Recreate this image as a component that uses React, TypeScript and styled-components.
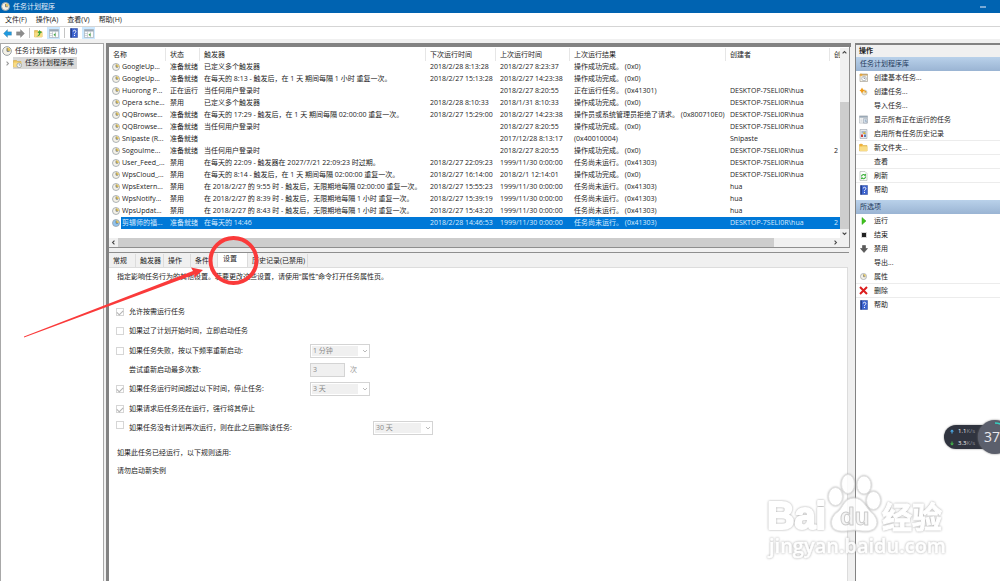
import React from "react";
import styled, { createGlobalStyle, css } from "styled-components";

const GlobalStyle = createGlobalStyle`
  * { box-sizing: border-box; }
  body {
    margin: 0;
    background: #fff;
    color: #1c1c1c;
    font: 7px/12px "Open Sans", "Noto Sans CJK SC", sans-serif;
  }
  button, input, select { font: inherit; color: inherit; margin: 0; padding: 0; }
  button { border: 0; background: none; text-align: left; }
`;

const Window = styled.div`
  position: relative;
  display: flex;
  flex-direction: column;
  min-height: 100vh;
  overflow: hidden;
  white-space: nowrap;
`;

const TitleBar = styled.header`
  display: flex;
  align-items: center;
  gap: 3px;
  height: 13px;
  padding: 0 14px 0 1px;
  background: #0063b1;
  color: #e4eefa;
`;

const Title = styled.h1`
  flex: 1;
  margin: 0;
  font-size: 7px;
  font-weight: 400;
`;

const Minimize = styled.button`
  width: 6px;
  height: 2px;
  background: #78a9d6;
`;

const MenuBar = styled.nav`
  display: flex;
  gap: 9px;
  height: 14px;
  padding: 0 5px;
  border-bottom: 1px solid #d5d5d5;
`;

const ToolBar = styled.div`
  display: flex;
  align-items: center;
  gap: 4px;
  height: 16px;
  padding: 0 3px;
  border-bottom: 4px solid #f0f0f0;
`;

const ToolButton = styled.button<{ $active?: boolean }>`
  display: flex;
  align-items: center;
  justify-content: center;
  width: ${(p) => (p.$active ? 13 : 9)}px;
  height: 12px;
  background: ${(p) => (p.$active ? "#cce8ff" : "none")};
`;

const ToolDivider = styled.span`
  width: 1px;
  height: 10px;
  background: #c4c4c4;
`;

const Workspace = styled.main`
  flex: 1;
  display: flex;
  background: #f0f0f0;
`;

const TreePane = styled.aside`
  flex: 0 0 104px;
  padding: 1px 0 0 1px;
  background: #fff;
  border: solid #a8a8a8;
  border-width: 1px 1px 0 1px;
`;

const TreeRow = styled.div<{ $child?: boolean }>`
  display: flex;
  align-items: center;
  gap: 3px;
  height: 12px;
  padding-left: ${(p) => (p.$child ? 3 : 0)}px;
`;

const TreeLabel = styled.span<{ $selected?: boolean }>`
  display: flex;
  align-items: center;
  gap: 3px;
  height: 12px;
  padding-right: 3px;
  background: ${(p) => (p.$selected ? "#d9d9d9" : "none")};
`;

const CenterPane = styled.section`
  flex: 1;
  min-width: 0;
  display: flex;
  flex-direction: column;
  margin: 0 4px 0 2px;
  border: solid #828282;
  border-width: 4px 0 0 3px;
`;

const ListPane = styled.div`
  margin-right: 1px;
  padding-top: 1px;
  background: #fff;
  border: solid #8e8e8e;
  border-width: 0 1px 1px 0;
`;

const ListArea = styled.div`
  display: flex;
`;

const TableClip = styled.div`
  flex: 1;
  min-width: 0;
  overflow: hidden;
  padding-bottom: 9px;
`;

const TaskTable = styled.table`
  width: 100%;
  table-layout: fixed;
  border-collapse: separate;
  border-spacing: 0;
`;

const Col = styled.col<{ $w?: number }>`
  ${(p) => p.$w && css`width: ${p.$w}px;`}
`;

const Th = styled.th`
  height: 13px;
  padding: 0 0 0 4px;
  overflow: hidden;
  border-right: 1px solid #e6e6e6;
  font-weight: 400;
  text-align: left;
  &:last-child { border-right: 0; }
`;

const Td = styled.td<{ $selected?: boolean }>`
  height: 12px;
  padding: 0 0 0 4px;
  overflow: hidden;
  ${(p) => p.$selected && css`background: #0078d7; color: #d9ecff;`}
`;

const NameTd = styled.td`
  height: 12px;
  padding: 0 0 0 3px;
`;

const NameBox = styled.div`
  display: flex;
  align-items: center;
  gap: 1px;
`;

const NameText = styled.span<{ $selected?: boolean }>`
  flex: 1;
  height: 12px;
  padding-left: 1px;
  overflow: hidden;
  ${(p) => p.$selected && css`background: #0078d7; color: #d9ecff;`}
`;

const VScroll = styled.div`
  display: flex;
  flex-direction: column;
  align-items: center;
  width: 9px;
  padding: 2px 0;
  background: #f0f0f0;
`;

const VThumb = styled.div`
  flex: 1;
  width: 9px;
  margin: 47px 0 2px;
  background: #cdcdcd;
`;

const HScroll = styled.div`
  display: flex;
  align-items: center;
  height: 9px;
  padding: 0 11px 0 2px;
  background: #f0f0f0;
`;

const HTrack = styled.div`
  flex: 1;
  height: 9px;
  margin: 0 2px;
`;

const HThumb = styled.div`
  width: 92%;
  height: 9px;
  background: #cdcdcd;
`;

const DetailPane = styled.div`
  flex: 1;
  display: flex;
  flex-direction: column;
  margin-top: 4px;
  margin-right: 2px;
  border-top: 1px solid #8e8e8e;
`;

const TabList = styled.div`
  display: flex;
  align-items: flex-end;
  height: 14px;
`;

const Tab = styled.button<{ $selected?: boolean }>`
  height: ${(p) => (p.$selected ? 14 : 13)}px;
  padding: ${(p) => (p.$selected ? "0 10px 2px 5px" : "0 2px 0 4px")};
  min-width: 27px;
  border-right: 1px solid #dcdcdc;
  background: ${(p) => (p.$selected ? "#fff" : "#f0f0f0")};
`;

const TabBody = styled.div`
  flex: 1;
  margin-right: 1px;
  padding: 3px 7px;
  background: #fff;
  border: solid #dcdcdc;
  border-width: 1px 1px 0 0;
`;

const Para = styled.p`
  margin: 0;
  padding: 0 1px;
`;

const Options = styled.form`
  display: grid;
  grid-auto-rows: 1fr;
  align-items: center;
  height: 136px;
  margin: 19px 0 9px;
`;

const Option = styled.div`
  display: grid;
  grid-template-columns: 13px 181px auto;
  align-items: center;
  height: 14px;
`;

const WideOption = styled(Option)`
  grid-template-columns: 13px 244px auto;
`;

const Check = styled.input<{ $raised?: boolean }>`
  appearance: none;
  display: flex;
  justify-content: center;
  width: 8px;
  height: 8px;
  border: 1px solid #d6d6d6;
  background: #fff;
  align-self: ${(p) => (p.$raised ? "start" : "center")};
  &:checked::after {
    content: "";
    width: 3px;
    height: 5px;
    border: solid #b4b4b4;
    border-width: 0 1px 1px 0;
    transform: rotate(45deg);
  }
`;

const OptionLabel = styled.label`
  grid-column: 2;
`;

const SelectBox = styled.span`
  position: relative;
  width: 60px;
  height: 14px;
`;

const Select = styled.select`
  appearance: none;
  display: block;
  width: 60px;
  height: 14px;
  padding-left: 2px;
  border: 1px solid #d4d4d4;
  border-radius: 0;
  background: linear-gradient(#f0f0f0, #f0f0f0) 1px 1px / 46px 10px no-repeat #fff;
  &:disabled { color: #8a8a8a; opacity: 1; }
`;

const SelectArrow = styled.svg`
  position: absolute;
  right: 2px;
  top: 5px;
`;

const CountField = styled.span`
  display: flex;
  align-items: center;
  gap: 5px;
  color: #9a9a9a;
`;

const NumberInput = styled.input`
  width: 35px;
  height: 14px;
  padding-left: 2px;
  border: 1px solid #d4d4d4;
  background: #f0f0f0;
  color: #8a8a8a;
`;

const Rule = styled(Para)`
  margin-bottom: 6px;
`;

const ActionPane = styled.aside`
  flex: 0 0 145px;
  background: #fff;
  border: solid #828282;
  border-width: 2px 0 0 1px;
`;

const PaneTitle = styled.h2`
  height: 12px;
  margin: 0;
  padding-left: 3px;
  background: #f0f0f0;
  font-size: 7px;
  font-weight: 600;
`;

const SectionTitle = styled.h3`
  height: 14px;
  margin: 0;
  padding-left: 4px;
  background: linear-gradient(#b9d1ea, #9ab4d3);
  color: #1e395b;
  font-size: 7px;
  font-weight: 400;
  line-height: 14px;
`;

const ActionList = styled.ul`
  margin: 0 0 3px;
  padding: 0;
  list-style: none;
`;

const ActionItem = styled.li<{ $ruled?: boolean }>`
  height: 14px;
  border-bottom: 1px solid ${(p) => (p.$ruled ? "#ececec" : "transparent")};
`;

const ActionButton = styled.button`
  display: flex;
  align-items: center;
  gap: 6px;
  width: 100%;
  height: 13px;
  padding-left: 3px;
`;

const IconSlot = styled.span`
  display: flex;
  justify-content: center;
  width: 9px;
`;

const Markup = styled.svg`
  position: absolute;
  left: 20px;
  top: 230px;
  pointer-events: none;
`;

const Watermark = styled.svg`
  position: absolute;
  right: 50px;
  bottom: 18px;
  pointer-events: none;
  opacity: 0.85;
  filter: drop-shadow(0 0 1px #999);
`;

const SpeedMeter = styled.div`
  position: absolute;
  right: -12px;
  top: 420px;
  display: flex;
  align-items: center;
`;

const Speeds = styled.div`
  width: 45px;
  height: 24px;
  margin-right: -11px;
  padding-left: 6px;
  border-radius: 12px 0 0 12px;
  background: #30343f;
  color: #f2f2f2;
  font-size: 6px;
  box-shadow: 0 0 2px #888;
`;

const Speed = styled.div`
  display: flex;
  align-items: center;
  gap: 4px;
  height: 12px;
`;

const Unit = styled.span`
  color: #8b8f99;
`;

const Gauge = styled.div`
  position: relative;
  width: 34px;
  height: 34px;
  padding-left: 6px;
  border-radius: 50%;
  background: #5b5f6c;
  color: #e8e8ec;
  font-size: 14px;
  line-height: 34px;
  box-shadow: 0 0 2px #777;
`;

const GaugeArc = styled.svg`
  position: absolute;
  left: 0;
  top: 0;
`;

const Clock = ({ size = 8, face = "#f4f1e6" }: { size?: number; face?: string }) => (
  <svg width={size} height={size} viewBox="0 0 16 16">
    <circle cx="8" cy="8" r="7" fill={face} stroke="#9aa1a7" strokeWidth="1.6" />
    <path d="M8 8V2.5A5.5 5.5 0 0 1 13.5 8Z" fill="#e5c65c" />
    <path d="M8 3.5V8.5H12" fill="none" stroke="#5a6470" strokeWidth="1.3" />
  </svg>
);

const Arrow = ({ color, flip }: { color: string; flip?: boolean }) => (
  <svg width="9" height="9" viewBox="0 0 18 18">
    <path d={flip ? "M17 9L9 1V5.500H1V12.500H9V17Z" : "M1 9L9 1V5.500H17V12.500H9V17Z"} fill={color} stroke="#00000040" />
  </svg>
);

const Folder = ({ mark }: { mark?: "up" | "new" | "clock" }) => (
  <svg width="9" height="9" viewBox="0 0 18 18">
    <path d="M1 3H7L9 5H16V16H1Z" fill="#efc75e" stroke="#cfa23a" />
    <path d="M1 7H17V16H1Z" fill="#f9dc86" />
    {mark === "up" && <path d="M4 15Q10 13 10 8H7L11 2L16 8H13Q12 15 4 15Z" fill="#3fa63a" />}
    {mark === "new" && <path d="M4 0L5 3L8 4L5 5L4 8L3 5L0 4L3 3Z" fill="#f5a623" />}
    {mark === "clock" && (
      <g>
        <circle cx="12.500" cy="12.500" r="4.700" fill="#f4f6f8" stroke="#8794a0" strokeWidth="1.300" />
        <path d="M12.500 9.500V12.500H15" fill="none" stroke="#4f6f96" />
      </g>
    )}
  </svg>
);

const Help = () => (
  <svg width="8" height="10" viewBox="0 0 16 20">
    <path d="M1 1H15V19H1Z" fill="#3b62cf" stroke="#2b4794" />
    <path d="M1 1H4V19H1Z" fill="#243f8f" />
    <path d="M6.500 7Q6.500 4.500 9 4.500T11.700 7Q11.700 8.500 10 9.600Q9 10.300 9 12" fill="none" stroke="#fff" strokeWidth="1.800" />
    <circle cx="9" cy="14.800" r="1.200" fill="#fff" />
  </svg>
);

const PanelIcon = ({ mark }: { mark?: "left" | "clock" }) => (
  <svg width="10" height="9" viewBox="0 0 20 18">
    <path d="M1 1H19V17H1Z" fill="#fbfbfb" stroke="#8f98a0" />
    <path d="M1 1H19V5H1Z" fill="#9aa8b5" />
    {mark !== "clock" && <path d="M7 5V17M13 5V17M1 9H7M1 13H7" stroke="#a5b0ba" />}
    {mark === "left" && <path d="M13 8V15L9 11.500Z" fill="#3ca43c" />}
    {mark === "clock" && (
      <g>
        <path d="M3 8H8M3 11H8M3 14H8" stroke="#a5b0ba" />
        <path d="M10 7H18V17H10Z" fill="#dce6f0" stroke="#7d8995" />
        <path d="M14 9V13H17" fill="none" stroke="#4f6f96" />
      </g>
    )}
  </svg>
);

const BasicTask = () => (
  <svg width="9" height="9" viewBox="0 0 18 18">
    <path d="M2 2H17V17H2Z" fill="#f7f3e9" stroke="#8a8273" />
    <path d="M2 2H17V5H2Z" fill="#c6a56b" />
    <circle cx="10" cy="11" r="4.500" fill="#fff" stroke="#77838e" />
    <path d="M10 8V11H12.500" fill="none" stroke="#456" />
    <path d="M4 0L5 3L8 4L5 5L4 8L3 5L0 4L3 3Z" fill="#f5a623" />
  </svg>
);

const NewTask = () => (
  <svg width="9" height="9" viewBox="0 0 18 18">
    <circle cx="11" cy="11" r="5" fill="#eee6cc" stroke="#9da3a8" />
    <path d="M11 11V7A4 4 0 0 1 15 11Z" fill="#e0a030" />
    <path d="M6 1L8 5L12 7L8 9L6 13L4 9L1 7L4 5Z" fill="#f29a12" />
  </svg>
);

const History = () => (
  <svg width="9" height="10" viewBox="0 0 18 20">
    <path d="M2 1H16V19H2Z" fill="#e4e8ed" stroke="#8c95a0" />
    <path d="M5 4H14V9H5Z" fill="#aab9ca" />
    <path d="M10 5L14 10L8 10Z" fill="#e0b030" />
    <path d="M4 11H8V16H4Z" fill="#d13a34" />
    <path d="M10 11H14V16H10Z" fill="#5880b8" />
  </svg>
);

const Refresh = () => (
  <svg width="9" height="10" viewBox="0 0 18 20">
    <path d="M2 1H12L16 5V19H2Z" fill="#fbfdfb" stroke="#97a39a" />
    <path d="M5 11A4 4 0 0 1 12 8.500M13 11A4 4 0 0 1 6 14" fill="none" stroke="#35ad35" strokeWidth="2.200" />
    <path d="M9.500 9.500H14V5ZM8.500 13H4V17Z" fill="#35ad35" />
  </svg>
);

const Play = () => (
  <svg width="8" height="8" viewBox="0 0 16 16"><path d="M4 1L12 8L4 15Z" fill="#3fc51c" stroke="#2f9d18" /></svg>
);

const Stop = () => (
  <svg width="8" height="8" viewBox="0 0 16 16"><path d="M2 2H14V14H2Z" fill="#d8d8d8" /><path d="M4 4H12V12H4Z" fill="#222" /></svg>
);

const Disable = () => (
  <svg width="8" height="8" viewBox="0 0 16 16"><path d="M5 1H11V7H15L8 15L1 7H5Z" fill="#5a5a5a" stroke="#3c3c3c" /></svg>
);

const Delete = () => (
  <svg width="9" height="9" viewBox="0 0 18 18"><path d="M2 2L16 16M16 2L2 16" stroke="#dc1e1e" strokeWidth="4" /></svg>
);

const chevrons = {
  up: "M1 5.500L4 2.500L7 5.500",
  down: "M1 2.500L4 5.500L7 2.500",
  left: "M5.500 1L2.500 4L5.500 7",
  right: "M2.500 1L5.500 4L2.500 7",
};

const Chevron = ({ dir, size = 5, color = "#444" }: { dir: keyof typeof chevrons; size?: number; color?: string }) => (
  <svg width={size} height={size} viewBox="0 0 8 8">
    <path d={chevrons[dir]} fill="none" stroke={color} strokeWidth="1.700" />
  </svg>
);

const columns: [string, number?][] = [
  ["名称", 57], ["状态", 34], ["触发器", 226], ["下次运行时间", 70],
  ["上次运行时间", 74], ["上次运行结果", 156], ["创建者", 104], ["创"],
];

const HOST = "DESKTOP-7SELI0R\\hua";
const OK = "操作成功完成。 (0x0)";
const NOT_RUN = "任务尚未运行。 (0x41303)";
const NEVER = "1999/11/30 0:00:00";

const tasks: string[][] = [
  ["GoogleUp...", "准备就绪", "已定义多个触发器", "2018/2/28 8:13:28", "2018/2/27 8:23:37", OK, "", ""],
  ["GoogleUp...", "准备就绪", "在每天的 8:13 - 触发后，在 1 天 期间每隔 1 小时 重复一次。", "2018/2/27 15:13:28", "2018/2/27 14:23:38", OK, "", ""],
  ["Huorong P...", "正在运行", "当任何用户登录时", "", "2018/2/27 8:20:55", "正在运行任务。 (0x41301)", HOST, ""],
  ["Opera sche...", "禁用", "已定义多个触发器", "2018/2/28 8:10:33", "2018/1/31 8:10:33", OK, HOST, ""],
  ["QQBrowse...", "准备就绪", "在每天的 17:29 - 触发后，在 1 天 期间每隔 02:00:00 重复一次。", "2018/2/27 15:29:00", "2018/2/27 14:23:38", "操作员或系统管理员拒绝了请求。 (0x800710E0)", HOST, ""],
  ["QQBrowse...", "准备就绪", "当任何用户登录时", "", "2018/2/27 8:20:55", OK, HOST, ""],
  ["Snipaste (R...", "准备就绪", "", "", "2017/12/28 8:13:17", "(0x40010004)", "Snipaste", ""],
  ["SogouIme...", "准备就绪", "当任何用户登录时", "", "2018/2/27 8:20:55", OK, HOST, "2"],
  ["User_Feed_...", "禁用", "在每天的 22:09 - 触发器在 2027/7/21 22:09:23 时过期。", "2018/2/27 22:09:23", NEVER, NOT_RUN, HOST, ""],
  ["WpsCloud_...", "禁用", "在每天的 8:14 - 触发后，在 1 天 期间每隔 02:00:00 重复一次。", "2018/2/27 16:14:00", "2018/2/1 12:14:01", OK, HOST, ""],
  ["WpsExtern...", "禁用", "在 2018/2/27 的 9:55 时 - 触发后，无限期地每隔 02:00:00 重复一次。", "2018/2/27 15:55:23", NEVER, NOT_RUN, "hua", ""],
  ["WpsNotify...", "禁用", "在 2018/2/27 的 8:39 时 - 触发后，无限期地每隔 1 小时 重复一次。", "2018/2/27 15:39:19", NEVER, NOT_RUN, "hua", ""],
  ["WpsUpdat...", "禁用", "在 2018/2/27 的 8:43 时 - 触发后，无限期地每隔 1 小时 重复一次。", "2018/2/27 15:43:20", NEVER, NOT_RUN, "hua", ""],
  ["剪辑师的福...", "准备就绪", "在每天的 14:46", "2018/2/28 14:46:53", NEVER, NOT_RUN, HOST, "2"],
];
const selectedTask = tasks.length - 1;

type Action = { label: string; icon?: React.ReactNode; ruled?: boolean };

const libraryActions: Action[] = [
  { label: "创建基本任务...", icon: <BasicTask /> },
  { label: "创建任务...", icon: <NewTask /> },
  { label: "导入任务..." },
  { label: "显示所有正在运行的任务", icon: <PanelIcon mark="clock" /> },
  { label: "启用所有任务历史记录", icon: <History />, ruled: true },
  { label: "新文件夹...", icon: <Folder mark="new" />, ruled: true },
  { label: "查看", ruled: true },
  { label: "刷新", icon: <Refresh />, ruled: true },
  { label: "帮助", icon: <Help /> },
];

const itemActions: Action[] = [
  { label: "运行", icon: <Play /> },
  { label: "结束", icon: <Stop /> },
  { label: "禁用", icon: <Disable /> },
  { label: "导出..." },
  { label: "属性", icon: <Clock size={7} />, ruled: true },
  { label: "删除", icon: <Delete />, ruled: true },
  { label: "帮助", icon: <Help /> },
];

const Actions = ({ items }: { items: Action[] }) => (
  <ActionList>
    {items.map((a) => (
      <ActionItem key={a.label} $ruled={a.ruled}>
        <ActionButton type="button"><IconSlot>{a.icon}</IconSlot>{a.label}</ActionButton>
      </ActionItem>
    ))}
  </ActionList>
);

const Dropdown = ({ id, value }: { id: string; value: string }) => (
  <SelectBox>
    <Select id={id} disabled><option>{value}</option></Select>
    <SelectArrow width="6" height="4" viewBox="0 0 6 4">
      <path d="M1 1L3 3L5 1" fill="none" stroke="#aaa" strokeWidth="0.8" />
    </SelectArrow>
  </SelectBox>
);

const tabs = ["常规", "触发器", "操作", "条件", "设置", "历史记录(已禁用)"];

export default function App() {
  return (
    <Window>
      <GlobalStyle />
      <TitleBar>
        <Clock size={9} />
        <Title>任务计划程序</Title>
        <Minimize aria-label="最小化" />
      </TitleBar>
      <MenuBar>
        {["文件(F)", "操作(A)", "查看(V)", "帮助(H)"].map((m) => <button key={m}>{m}</button>)}
      </MenuBar>
      <ToolBar>
        <ToolButton aria-label="后退"><Arrow color="#1f9ae0" /></ToolButton>
        <ToolButton aria-label="前进"><Arrow color="#8c8c8c" flip /></ToolButton>
        <ToolDivider />
        <ToolButton aria-label="向上"><Folder mark="up" /></ToolButton>
        <ToolButton aria-label="显示控制台树" $active><PanelIcon mark="left" /></ToolButton>
        <ToolDivider />
        <ToolButton aria-label="帮助"><Help /></ToolButton>
        <ToolButton aria-label="显示操作窗格" $active><PanelIcon mark="left" /></ToolButton>
      </ToolBar>
      <Workspace>
        <TreePane>
          <TreeRow><TreeLabel><Clock size={10} />任务计划程序 (本地)</TreeLabel></TreeRow>
          <TreeRow $child>
            <Chevron dir="right" color="#999" />
            <TreeLabel $selected><Folder mark="clock" />任务计划程序库</TreeLabel>
          </TreeRow>
        </TreePane>
        <CenterPane>
          <ListPane>
            <ListArea>
              <TableClip>
                <TaskTable>
                  <colgroup>{columns.map(([n, w]) => <Col key={n} $w={w} />)}</colgroup>
                  <thead><tr>{columns.map(([n]) => <Th key={n}>{n}</Th>)}</tr></thead>
                  <tbody>
                    {tasks.map(([name, ...rest], r) => {
                      const selected = r === selectedTask;
                      return (
                        <tr key={r}>
                          <NameTd>
                            <NameBox>
                              <Clock face={selected ? "#8fc3ee" : undefined} />
                              <NameText $selected={selected}>{name}</NameText>
                            </NameBox>
                          </NameTd>
                          {rest.map((t, i) => <Td key={i} $selected={selected}>{t}</Td>)}
                        </tr>
                      );
                    })}
                  </tbody>
                </TaskTable>
              </TableClip>
              <VScroll><Chevron dir="up" /><VThumb /><Chevron dir="down" /></VScroll>
            </ListArea>
            <HScroll>
              <Chevron dir="left" />
              <HTrack><HThumb /></HTrack>
              <Chevron dir="right" />
            </HScroll>
          </ListPane>
          <DetailPane>
            <TabList role="tablist">
              {tabs.map((t) => (
                <Tab key={t} role="tab" aria-selected={t === "设置"} $selected={t === "设置"}>{t}</Tab>
              ))}
            </TabList>
            <TabBody>
              <Para>指定影响任务行为的其他设置。若要更改这些设置，请使用“属性”命令打开任务属性页。</Para>
              <Options>
                <Option>
                  <Check type="checkbox" id="demand" defaultChecked disabled />
                  <OptionLabel htmlFor="demand">允许按需运行任务</OptionLabel>
                </Option>
                <Option>
                  <Check type="checkbox" id="missed" disabled />
                  <OptionLabel htmlFor="missed">如果过了计划开始时间，立即启动任务</OptionLabel>
                </Option>
                <Option>
                  <Check type="checkbox" id="retry" aria-label="重新启动" disabled />
                  <OptionLabel htmlFor="retryEvery">如果任务失败，按以下频率重新启动:</OptionLabel>
                  <Dropdown id="retryEvery" value="1 分钟" />
                </Option>
                <Option>
                  <OptionLabel htmlFor="retryCount">尝试重新启动最多次数:</OptionLabel>
                  <CountField><NumberInput id="retryCount" defaultValue="3" disabled />次</CountField>
                </Option>
                <Option>
                  <Check type="checkbox" id="limit" aria-label="停止任务" defaultChecked disabled />
                  <OptionLabel htmlFor="limitTime">如果任务运行时间超过以下时间，停止任务:</OptionLabel>
                  <Dropdown id="limitTime" value="3 天" />
                </Option>
                <Option>
                  <Check type="checkbox" id="force" defaultChecked disabled />
                  <OptionLabel htmlFor="force">如果请求后任务还在运行，强行将其停止</OptionLabel>
                </Option>
                <WideOption>
                  <Check type="checkbox" id="expire" aria-label="删除任务" disabled $raised />
                  <OptionLabel htmlFor="expireAfter">如果任务没有计划再次运行，则在此之后删除该任务:</OptionLabel>
                  <Dropdown id="expireAfter" value="30 天" />
                </WideOption>
              </Options>
              <Rule>如果此任务已经运行，以下规则适用:</Rule>
              <Rule>请勿启动新实例</Rule>
            </TabBody>
          </DetailPane>
        </CenterPane>
        <ActionPane>
          <PaneTitle>操作</PaneTitle>
          <SectionTitle>任务计划程序库</SectionTitle>
          <Actions items={libraryActions} />
          <SectionTitle>所选项</SectionTitle>
          <Actions items={itemActions} />
        </ActionPane>
      </Workspace>

      <Markup width="245" height="112" viewBox="20 230 245 112">
        <ellipse cx="233.500" cy="260.500" rx="23" ry="22.500" fill="none" stroke="#fa3a3a" strokeWidth="4" />
        <path d="M24 336.500L193 271L191 267.500L203 270L194 278L194.500 274.500L24 337.500Z" fill="#fa3a3a" />
      </Markup>

      <Watermark
        width="185"
        height="92"
        viewBox="765 471 185 92"
        fill="#fff"
        stroke="#fff"
        strokeWidth="2"
        strokeLinejoin="round"
        fontFamily='"Liberation Sans", "Noto Sans CJK SC", sans-serif'
        fontWeight="700"
      >
        <text x="767" y="529" fontSize="38">Bai</text>
        <g stroke="#dedede" strokeWidth="1">
          <ellipse cx="835.500" cy="496.500" rx="7" ry="9" />
          <ellipse cx="848" cy="484" rx="6.500" ry="9.500" />
          <ellipse cx="864" cy="485" rx="7" ry="9" />
          <ellipse cx="873.500" cy="500.500" rx="7" ry="9" />
          <path d="M854 498Q861 498 866 506Q869 511 874 515Q880 523 874 529Q870 532 862 531Q854 529 846 531Q837 532 833 528Q829 521 835 514Q840 511 843 505Q847 498 854 498Z" />
          <text x="840" y="525" fontSize="24" fill="#f4f4f4" stroke="#c4c4c4">du</text>
        </g>
        <text x="882" y="528" fontSize="30" strokeWidth="1">经验</text>
        <text x="769" y="553" fontSize="20" fontFamily='"Open Sans", sans-serif' fontWeight="600" strokeWidth="0.5">jingyan.baidu.com</text>
      </Watermark>

      <SpeedMeter>
        <Speeds>
          <Speed>
            <svg width="4" height="5" viewBox="0 0 8 10"><path d="M4 1L8 5H5V9H3V5H0Z" fill="#4db4f5" /></svg>
            <span>1.1<Unit>K/s</Unit></span>
          </Speed>
          <Speed>
            <svg width="4" height="5" viewBox="0 0 8 10"><path d="M4 9L8 5H5V1H3V5H0Z" fill="#43c04a" /></svg>
            <span>3.3<Unit>K/s</Unit></span>
          </Speed>
        </Speeds>
        <Gauge>
          37
          <GaugeArc width="34" height="34" viewBox="0 0 34 34">
            <path d="M17 3A14 14 0 0 1 29 10" fill="none" stroke="#35d0c0" strokeWidth="1.500" />
          </GaugeArc>
        </Gauge>
      </SpeedMeter>
    </Window>
  );
}
